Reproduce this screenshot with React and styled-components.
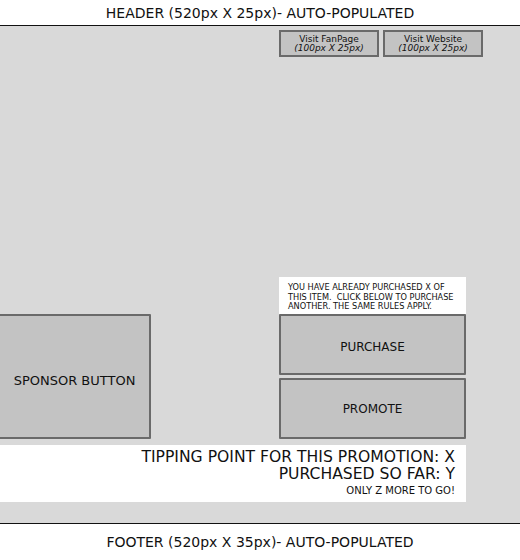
import React from "react";
import styled, { createGlobalStyle } from "styled-components";

const GlobalStyle = createGlobalStyle`
  body {
    margin: 0;
    font-family: "DejaVu Sans", Verdana, sans-serif;
    color: #111;
    background: #fff;
  }
`;

const Page = styled.div`
  width: 520px;
  height: 560px;
  overflow: hidden;
  display: flex;
  flex-direction: column;
`;

const Bar = styled.div`
  height: ${props => props.height}px;
  display: flex;
  align-items: center;
  justify-content: center;
  font-size: 14px;
  background: #fff;
  border-top: ${props => (props.top ? "1px solid #111" : "none")};
  border-bottom: ${props => (props.bottom ? "1px solid #111" : "none")};
`;

const Main = styled.div`
  height: 497px;
  box-sizing: border-box;
  background: #d9d9d9;
  padding-top: 4px;
`;

const Links = styled.div`
  display: flex;
  gap: 4px;
  margin-left: 279px;
`;

const LinkButton = styled.div`
  width: 100px;
  height: 27px;
  box-sizing: border-box;
  border: 2px solid #6a6a6a;
  background: #c3c3c3;
  display: flex;
  flex-direction: column;
  align-items: center;
  justify-content: center;
  font-size: 9px;
  line-height: 9px;

  em {
    font-style: italic;
  }
`;

const Stage = styled.div`
  display: grid;
  grid-template-columns: 153px 128px 187px;
  grid-template-rows: 37px 61px 3px 61px;
  margin-top: 220px;
  margin-left: -2px;
`;

const Notice = styled.div`
  grid-column: 3;
  grid-row: 1;
  background: #fff;
  font-size: 8.2px;
  line-height: 9.5px;
  padding: 6px 0 0 9px;
  text-transform: uppercase;
`;

const Box = styled.div`
  box-sizing: border-box;
  border: 2px solid #6a6a6a;
  border-radius: 1px;
  background: #c3c3c3;
  display: flex;
  align-items: center;
  justify-content: center;
  font-size: ${props => props.size || 12}px;
  padding-top: ${props => props.nudge || 0}px;
`;

const Sponsor = styled(Box)`
  grid-column: 1;
  grid-row: 2 / span 3;
`;

const Action = styled(Box)`
  grid-column: 3;
  grid-row: ${props => props.row};
`;

const Tipping = styled.div`
  width: 468px;
  height: 57px;
  margin-top: 6px;
  margin-left: -2px;
  box-sizing: border-box;
  background: #fff;
  padding: 4px 11px 0 0;
  text-align: right;
`;

const Big = styled.div`
  font-size: 15.6px;
  line-height: 16.5px;
`;

const Small = styled.div`
  font-size: 10px;
  line-height: 17px;
`;

export default function App() {
  return (
    <>
      <GlobalStyle />
      <Page>
        <Bar height={25} bottom>
          HEADER (520px X 25px)- AUTO-POPULATED
        </Bar>
        <Main>
          <Links>
            <LinkButton>
              <span>Visit FanPage</span>
              <em>(100px X 25px)</em>
            </LinkButton>
            <LinkButton>
              <span>Visit Website</span>
              <em>(100px X 25px)</em>
            </LinkButton>
          </Links>
          <Stage>
            <Notice>
              You have already purchased X of
              <br />
              this item.&nbsp; Click below to purchase
              <br />
              another. The same rules apply.
            </Notice>
            <Sponsor size={13} nudge={7}>SPONSOR BUTTON</Sponsor>
            <Action row={2} nudge={5}>PURCHASE</Action>
            <Action row={4}>PROMOTE</Action>
          </Stage>
          <Tipping>
            <Big>TIPPING POINT FOR THIS PROMOTION: X</Big>
            <Big>PURCHASED SO FAR: Y</Big>
            <Small>ONLY Z MORE TO GO!</Small>
          </Tipping>
        </Main>
        <Bar height={35} top>
          FOOTER (520px X 35px)- AUTO-POPULATED
        </Bar>
      </Page>
    </>
  );
}
